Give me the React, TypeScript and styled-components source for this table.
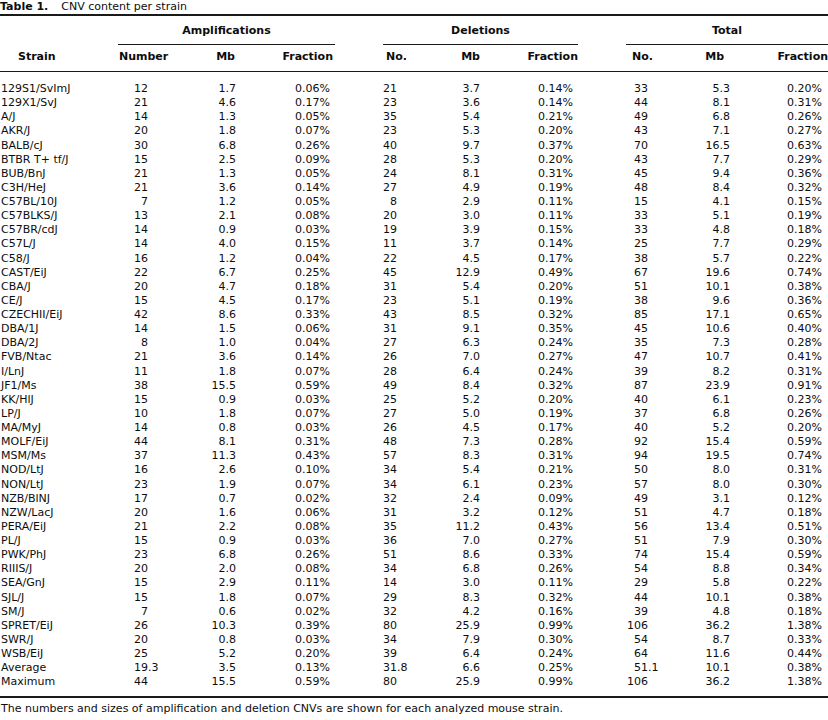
import React from "react";
import styled, { createGlobalStyle } from "styled-components";

const Global = createGlobalStyle`
  html, body { margin: 0; padding: 0; background: #ffffff; }
  body {
    font-family: "DejaVu Sans", "Open Sans", sans-serif;
    color: #0d0d0d;
  }
`;

const Page = styled.div`
  width: 828px;
  font-size: 11px;
`;

const Title = styled.div`
  display: flex;
  align-items: baseline;
  gap: 13px;
  height: 14px;
  line-height: 14px;
  font-size: 11px;
  padding-left: 0;
`;

const TitleLabel = styled.span`
  font-weight: 700;
`;

const Table = styled.table`
  width: 828px;
  table-layout: fixed;
  border-collapse: collapse;
  border-top: 2px solid #1a1a1a;
  border-bottom: 2px solid #1a1a1a;
`;

const Col = styled.col<{ $w: number }>`
  width: ${(p) => p.$w}px;
`;

const GroupCell = styled.th<{ $gap: number }>`
  padding: 8px ${(p) => p.$gap}px 0 0;
  font-weight: 700;
`;

const GroupRule = styled.div`
  text-align: center;
  line-height: 14px;
  padding-bottom: 6px;
  border-bottom: 1px solid #1a1a1a;
`;

const HeadRow = styled.tr`
  border-bottom: 1px solid #1a1a1a;
`;

const ColHead = styled.th<{ $align: "left" | "right"; $pl?: number; $pr?: number }>`
  text-align: ${(p) => p.$align};
  padding: 5px ${(p) => p.$pr ?? 0}px 7px ${(p) => p.$pl ?? 0}px;
  line-height: 14px;
  font-weight: 700;
  white-space: nowrap;
`;

const Row = styled.tr`
  height: 14.12px;
  &:first-child td { padding-top: 10px; }
  &:last-child td { padding-bottom: 7px; }
`;

const TextCell = styled.td<{ $pl: number }>`
  padding: 0 0 0 ${(p) => p.$pl}px;
  line-height: 14.12px;
  text-align: left;
  white-space: nowrap;
`;

const RightCell = styled.td<{ $pr: number }>`
  padding: 0 ${(p) => p.$pr}px 0 0;
  line-height: 14.12px;
  text-align: right;
  white-space: nowrap;
`;

const DecimalCell = styled.td`
  padding: 0;
  line-height: 14.12px;
  text-align: left;
  white-space: nowrap;
`;

const IntPart = styled.span<{ $w: number }>`
  display: inline-block;
  width: ${(p) => p.$w}px;
  text-align: right;
`;

const Caption = styled.p`
  margin: 0;
  padding: 4px 0 0 1px;
  line-height: 14px;
  font-size: 11px;
`;

type ColSpec =
  | { kind: "text"; pl: number }
  | { kind: "dec"; w: number }
  | { kind: "right"; pr: number };

const columns: { width: number; head: string; align: "left" | "right"; hpl?: number; hpr?: number; spec: ColSpec }[] = [
  { width: 118, head: "Strain", align: "left", hpl: 18, spec: { kind: "text", pl: 1 } },
  { width: 77, head: "Number", align: "left", hpl: 1, spec: { kind: "dec", w: 30 } },
  { width: 63, head: "Mb", align: "right", hpr: 23, spec: { kind: "right", pr: 22 } },
  { width: 125, head: "Fraction", align: "right", hpr: 50, spec: { kind: "right", pr: 53 } },
  { width: 62, head: "No.", align: "left", hpl: 3, spec: { kind: "dec", w: 14 } },
  { width: 55, head: "Mb", align: "right", hpr: 20, spec: { kind: "right", pr: 20 } },
  { width: 126, head: "Fraction", align: "right", hpr: 48, spec: { kind: "right", pr: 53 } },
  { width: 64, head: "No.", align: "left", hpl: 6, spec: { kind: "dec", w: 22 } },
  { width: 60, head: "Mb", align: "right", hpr: 26, spec: { kind: "right", pr: 20 } },
  { width: 78, head: "Fraction", align: "right", hpr: 0, spec: { kind: "right", pr: 6 } },
];

const groups = [
  { label: "Amplifications", gap: 48 },
  { label: "Deletions", gap: 48 },
  { label: "Total", gap: 0 },
];

const raw = `129S1/SvImJ|12|1.7|0.06%|21|3.7|0.14%|33|5.3|0.20%
129X1/SvJ|21|4.6|0.17%|23|3.6|0.14%|44|8.1|0.31%
A/J|14|1.3|0.05%|35|5.4|0.21%|49|6.8|0.26%
AKR/J|20|1.8|0.07%|23|5.3|0.20%|43|7.1|0.27%
BALB/cJ|30|6.8|0.26%|40|9.7|0.37%|70|16.5|0.63%
BTBR T+ tf/J|15|2.5|0.09%|28|5.3|0.20%|43|7.7|0.29%
BUB/BnJ|21|1.3|0.05%|24|8.1|0.31%|45|9.4|0.36%
C3H/HeJ|21|3.6|0.14%|27|4.9|0.19%|48|8.4|0.32%
C57BL/10J|7|1.2|0.05%|8|2.9|0.11%|15|4.1|0.15%
C57BLKS/J|13|2.1|0.08%|20|3.0|0.11%|33|5.1|0.19%
C57BR/cdJ|14|0.9|0.03%|19|3.9|0.15%|33|4.8|0.18%
C57L/J|14|4.0|0.15%|11|3.7|0.14%|25|7.7|0.29%
C58/J|16|1.2|0.04%|22|4.5|0.17%|38|5.7|0.22%
CAST/EiJ|22|6.7|0.25%|45|12.9|0.49%|67|19.6|0.74%
CBA/J|20|4.7|0.18%|31|5.4|0.20%|51|10.1|0.38%
CE/J|15|4.5|0.17%|23|5.1|0.19%|38|9.6|0.36%
CZECHII/EiJ|42|8.6|0.33%|43|8.5|0.32%|85|17.1|0.65%
DBA/1J|14|1.5|0.06%|31|9.1|0.35%|45|10.6|0.40%
DBA/2J|8|1.0|0.04%|27|6.3|0.24%|35|7.3|0.28%
FVB/Ntac|21|3.6|0.14%|26|7.0|0.27%|47|10.7|0.41%
I/LnJ|11|1.8|0.07%|28|6.4|0.24%|39|8.2|0.31%
JF1/Ms|38|15.5|0.59%|49|8.4|0.32%|87|23.9|0.91%
KK/HlJ|15|0.9|0.03%|25|5.2|0.20%|40|6.1|0.23%
LP/J|10|1.8|0.07%|27|5.0|0.19%|37|6.8|0.26%
MA/MyJ|14|0.8|0.03%|26|4.5|0.17%|40|5.2|0.20%
MOLF/EiJ|44|8.1|0.31%|48|7.3|0.28%|92|15.4|0.59%
MSM/Ms|37|11.3|0.43%|57|8.3|0.31%|94|19.5|0.74%
NOD/LtJ|16|2.6|0.10%|34|5.4|0.21%|50|8.0|0.31%
NON/LtJ|23|1.9|0.07%|34|6.1|0.23%|57|8.0|0.30%
NZB/BlNJ|17|0.7|0.02%|32|2.4|0.09%|49|3.1|0.12%
NZW/LacJ|20|1.6|0.06%|31|3.2|0.12%|51|4.7|0.18%
PERA/EiJ|21|2.2|0.08%|35|11.2|0.43%|56|13.4|0.51%
PL/J|15|0.9|0.03%|36|7.0|0.27%|51|7.9|0.30%
PWK/PhJ|23|6.8|0.26%|51|8.6|0.33%|74|15.4|0.59%
RIIIS/J|20|2.0|0.08%|34|6.8|0.26%|54|8.8|0.34%
SEA/GnJ|15|2.9|0.11%|14|3.0|0.11%|29|5.8|0.22%
SJL/J|15|1.8|0.07%|29|8.3|0.32%|44|10.1|0.38%
SM/J|7|0.6|0.02%|32|4.2|0.16%|39|4.8|0.18%
SPRET/EiJ|26|10.3|0.39%|80|25.9|0.99%|106|36.2|1.38%
SWR/J|20|0.8|0.03%|34|7.9|0.30%|54|8.7|0.33%
WSB/EiJ|25|5.2|0.20%|39|6.4|0.24%|64|11.6|0.44%
Average|19.3|3.5|0.13%|31.8|6.6|0.25%|51.1|10.1|0.38%
Maximum|44|15.5|0.59%|80|25.9|0.99%|106|36.2|1.38%`;

const rows = raw.split("\n").map((line) => line.split("|"));

function Cell({ spec, value }: { spec: ColSpec; value: string }) {
  if (spec.kind === "text") return <TextCell $pl={spec.pl}>{value}</TextCell>;
  if (spec.kind === "right") return <RightCell $pr={spec.pr}>{value}</RightCell>;
  const dot = value.indexOf(".");
  const intPart = dot >= 0 ? value.slice(0, dot) : value;
  const frac = dot >= 0 ? value.slice(dot) : "";
  return (
    <DecimalCell>
      <IntPart $w={spec.w}>{intPart}</IntPart>
      {frac}
    </DecimalCell>
  );
}

export default function App() {
  return (
    <Page>
      <Global />
      <Title>
        <TitleLabel>Table 1.</TitleLabel>
        <span>CNV content per strain</span>
      </Title>
      <Table>
        <colgroup>
          {columns.map((c, i) => (
            <Col key={i} $w={c.width} />
          ))}
        </colgroup>
        <thead>
          <tr>
            <th />
            {groups.map((g) => (
              <GroupCell key={g.label} colSpan={3} $gap={g.gap}>
                <GroupRule>{g.label}</GroupRule>
              </GroupCell>
            ))}
          </tr>
          <HeadRow>
            {columns.map((c, i) => (
              <ColHead key={i} $align={c.align} $pl={c.hpl} $pr={c.hpr}>
                {c.head}
              </ColHead>
            ))}
          </HeadRow>
        </thead>
        <tbody>
          {rows.map((r) => (
            <Row key={r[0]}>
              {r.map((v, i) => (
                <Cell key={i} spec={columns[i].spec} value={v} />
              ))}
            </Row>
          ))}
        </tbody>
      </Table>
      <Caption>
        The numbers and sizes of amplification and deletion CNVs are shown for each analyzed mouse strain.
      </Caption>
    </Page>
  );
}
